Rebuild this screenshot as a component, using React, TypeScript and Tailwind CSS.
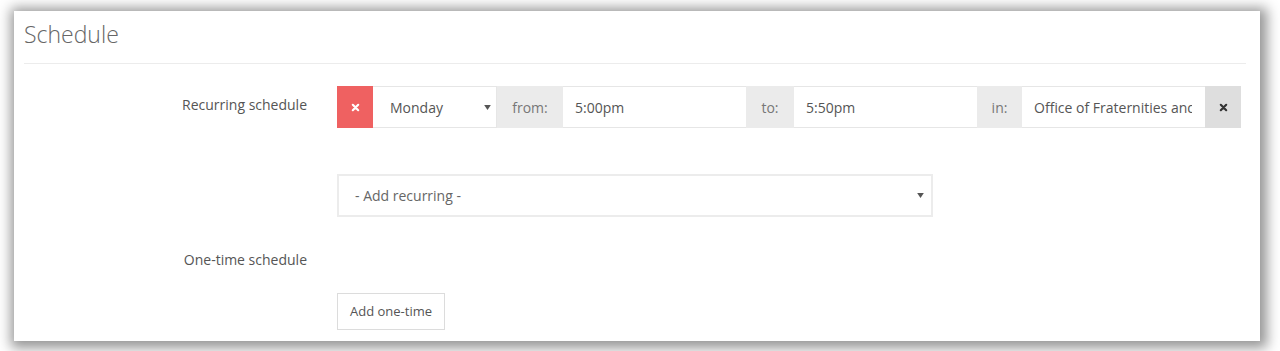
const font = { fontFamily: '"Open Sans", "Liberation Sans", sans-serif' };

const Times = ({ className }: { className: string }) => (
  <svg viewBox="0 0 10 10" className={className}>
    <path d="M2 2 L8 8 M8 2 L2 8" stroke="currentColor" strokeWidth="2.4" strokeLinecap="round" />
  </svg>
);

const Caret = () => (
  <svg viewBox="0 0 8 6" className="w-[7px] h-[5px] text-[#555]">
    <path d="M0 0 H8 L4 6 Z" fill="currentColor" />
  </svg>
);

const Addon = ({ label, w }: { label: string; w: string }) => (
  <div className={`${w} h-full bg-[#ebebeb] flex items-center justify-center text-[14px] text-[#777]`}>
    {label}
  </div>
);

const Field = ({ value }: { value: string }) => (
  <div className="w-[183px] h-full bg-white border-y border-[#e6e6e6] flex items-center pl-3 pr-[13px] text-[14px] text-[#555]">
    <span className="block w-full overflow-hidden whitespace-nowrap">{value}</span>
  </div>
);

export default function App() {
  return (
    <div className="w-[1280px] h-[351px] bg-white pt-[11px] pl-[14px]" style={font}>
      <div className="w-[1246px] h-[330px] bg-white shadow-[2px_2px_12px_5px_rgba(0,0,0,0.42)] pl-[10px] pr-[14px]">
        <div className="h-[53px] flex items-end border-b border-[#ececec]">
          <h2 className="text-[23px] font-light text-[#666] leading-none pb-[17px]">Schedule</h2>
        </div>

        <div className="flex mt-[22px]">
          <div className="w-[283px] text-right text-[14px] text-[#555] pt-[8px]">Recurring schedule</div>
          <div className="ml-[30px] flex-1">
            <div className="flex h-[42px] w-[904px]">
              <button className="w-[36px] h-full bg-[#ef6161] flex items-center justify-center text-white">
                <Times className="w-[9px] h-[9px]" />
              </button>
              <div className="w-[124px] h-full bg-white border border-[#e6e6e6] border-l-0 flex items-center justify-between pl-[17px] pr-[5px] text-[14px] text-[#555]">
                <span>Monday</span>
                <Caret />
              </div>
              <Addon label="from:" w="w-[66px]" />
              <Field value="5:00pm" />
              <Addon label="to:" w="w-[48px]" />
              <Field value="5:50pm" />
              <Addon label="in:" w="w-[45px]" />
              <Field value="Office of Fraternities and Sororities" />
              <button className="w-[36px] h-full bg-[#dedede] flex items-center justify-center text-[#333]">
                <Times className="w-[9px] h-[9px]" />
              </button>
            </div>

            <div className="mt-[46px] w-[596px] h-[43px] border-2 border-[#ececec] flex items-center justify-between pl-[16px] pr-[7px] text-[14px] text-[#666]">
              <span>- Add recurring -</span>
              <Caret />
            </div>
          </div>
        </div>

        <div className="flex mt-[32px]">
          <div className="w-[283px] text-right text-[14px] text-[#555]">One-time schedule</div>
        </div>

        <div className="ml-[313px] mt-[23px]">
          <button className="h-[37px] px-[12px] border border-[#dcdcdc] bg-white text-[13px] text-[#555]">
            Add one-time
          </button>
        </div>
      </div>
    </div>
  );
}
